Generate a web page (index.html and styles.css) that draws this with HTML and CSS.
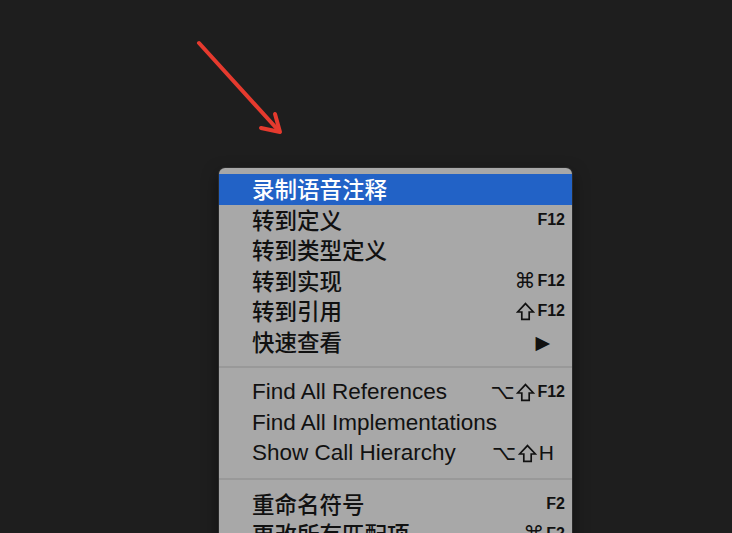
FILE: index.html
```html
<!DOCTYPE html>
<html lang="zh-CN">
<head>
    <meta charset="UTF-8">
    <title>上下文菜单</title>
    <link rel="stylesheet" href="styles.css">
</head>
<body>
    <!-- 标注箭头 -->
    <svg class="pointer" width="732" height="533" viewBox="0 0 732 533">
        <path d="M199 43 L279 131" stroke="#e53a2e" stroke-width="4" stroke-linecap="round" fill="none"/>
        <path d="M275 114 L280 132 L261 128" stroke="#e53a2e" stroke-width="4" stroke-linecap="round" stroke-linejoin="round" fill="none"/>
    </svg>

    <div class="menu">
        <div class="item active"><span class="label cjk">录制语音注释</span></div>
        <div class="item"><span class="label cjk">转到定义</span><span class="key">F12</span></div>
        <div class="item"><span class="label cjk">转到类型定义</span></div>
        <div class="item"><span class="label cjk">转到实现</span><span class="key"><span class="sym">⌘</span>F12</span></div>
        <div class="item"><span class="label cjk">转到引用</span><span class="key"><svg class="shift" viewBox="0 0 18 18"><path d="M9 1.5 L16.5 9.5 H12.5 V16.5 H5.5 V9.5 H1.5 Z"/></svg>F12</span></div>
        <div class="item"><span class="label cjk">快速查看</span><span class="key arrow">▶</span></div>
        <div class="sep"></div>
        <div class="item"><span class="label">Find All References</span><span class="key"><span class="sym">⌥</span><svg class="shift" viewBox="0 0 18 18"><path d="M9 1.5 L16.5 9.5 H12.5 V16.5 H5.5 V9.5 H1.5 Z"/></svg>F12</span></div>
        <div class="item"><span class="label">Find All Implementations</span></div>
        <div class="item"><span class="label">Show Call Hierarchy</span><span class="key big"><span class="sym">⌥</span><svg class="shift" viewBox="0 0 18 18"><path d="M9 1.5 L16.5 9.5 H12.5 V16.5 H5.5 V9.5 H1.5 Z"/></svg>H</span></div>
        <div class="sep"></div>
        <div class="item"><span class="label cjk">重命名符号</span><span class="key">F2</span></div>
        <div class="item"><span class="label cjk">更改所有匹配项</span><span class="key"><span class="sym">⌘</span>F2</span></div>
    </div>
</body>
</html>
```

FILE: styles.css
```css
body {
    margin: 0;
    height: 533px;
    overflow: hidden;
    background-color: #1e1e1e;
    font-family: "Liberation Sans", "Noto Sans CJK SC", sans-serif;
    color: #111;
}
.pointer {
    position: absolute;
    left: 0;
    top: 0;
}
.menu {
    margin: 168px 0 0 219px;
    width: 353px;
    padding-top: 6px;
    background: #a8a8a8;
    border-radius: 6px 6px 0 0;
    box-shadow: 0 0 0 1px #2a2a2a, 0 6px 16px rgba(0, 0, 0, 0.5);
}
.item {
    display: flex;
    align-items: center;
    justify-content: space-between;
    height: 30.5px;
    padding: 0 7px 0 33px;
}
.item.active {
    background: #2262c6;
    color: #fff;
}
.label {
    font-size: 22.5px;
}
.label.cjk {
    font-weight: 500;
    margin-top: -2px;
}
.key {
    display: flex;
    align-items: center;
    font-size: 16px;
    font-weight: bold;
    color: #111;
}
.key .sym {
    font-family: "DejaVu Sans", sans-serif;
    font-weight: normal;
    font-size: 21px;
    margin-right: 2px;
}
.shift {
    width: 19px;
    height: 19px;
    margin-right: 2px;
    fill: none;
    stroke: #111;
    stroke-width: 1.6;
    stroke-linejoin: miter;
}
.key.big {
    font-size: 21px;
    font-weight: normal;
    margin-right: 11px;
}
.key.arrow {
    font-family: "DejaVu Sans", sans-serif;
    font-weight: normal;
    font-size: 19px;
    margin-right: 15px;
}
.sep {
    height: 20px;
    display: flex;
    align-items: center;
}
.sep::before {
    content: "";
    flex: 1;
    height: 2px;
    background: #999;
}
```
